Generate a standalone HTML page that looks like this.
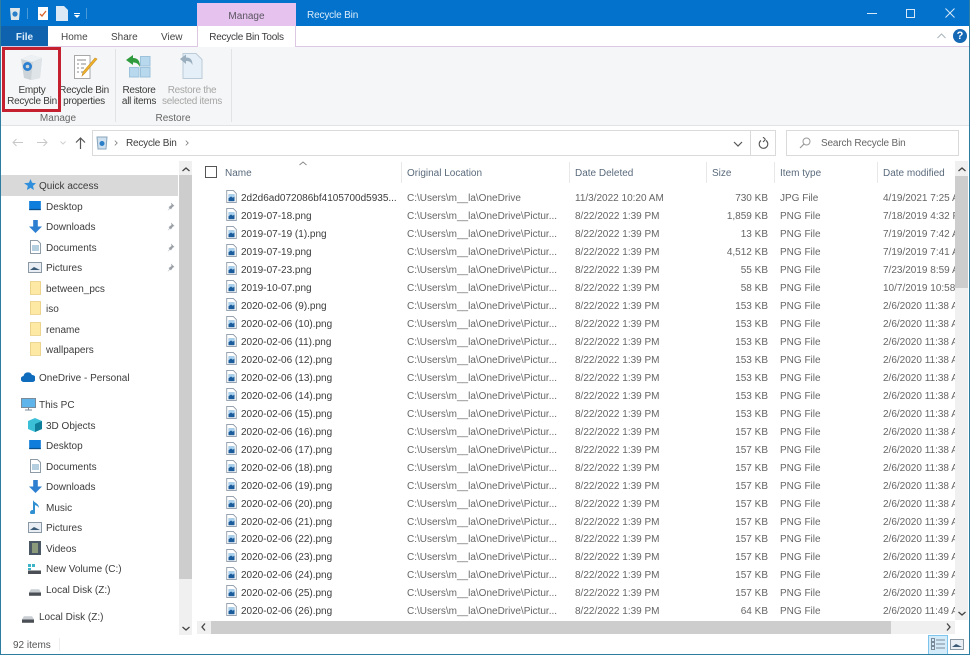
<!DOCTYPE html>
<html><head><meta charset="utf-8"><title>Recycle Bin</title>
<style>
html,body{margin:0;padding:0;width:970px;height:655px;overflow:hidden;background:#fff}
body{position:relative;font:10px/18px "Liberation Sans",sans-serif;color:#4a4a4a}
div,span,svg{position:absolute;white-space:nowrap}
.t{color:#555}
.r{left:0;width:955px;height:18px}
.r svg{left:226px;top:2px;width:11px;height:13px}
.r span{margin-top:2px}
.n{left:241px;color:#3c3c3c}.o{left:407px;width:153px;overflow:hidden;color:#666}.d{left:575px;color:#666}
.s{right:187px;color:#666}.y{left:780px;color:#666}.m{left:883px;width:72px;overflow:hidden;color:#666}
.h{top:165px;color:#5a6a7c;font-size:10px}
.v{top:162px;width:1px;height:21px;background:#e8e8e8}
.nv{height:20px;line-height:20px;color:#3c3c3c;font-size:10px;margin-top:2px}
.l1{left:46px}.l0{left:39px}
.i{left:28px}.i0{left:21px}
.rb{text-align:center;line-height:11px;color:#444;font-size:10px;letter-spacing:-.28px}
</style></head><body>
<svg width="0" height="0" style="left:0;top:0"><defs>
<symbol id="f" viewBox="0 0 12 15"><path d="M.5.500h7.500l3.500 3.500v10.500h-11z" fill="#fff" stroke="#8a98a6"/><rect x="2.500" y="5" width="7" height="8" fill="#1a5c9c"/><path d="M2.500 5h7v2.500l-2 1.500-2-1.500-3 2z" fill="#a8d0ec"/></symbol>
<symbol id="fo" viewBox="0 0 12 15"><path d="M.5.500h11v14h-11z" fill="#fde9a4" stroke="#ead18a"/></symbol>
<symbol id="mon" viewBox="0 0 14 12"><rect width="14" height="10.500" fill="#0f7ddb"/><rect y="9.500" width="14" height="1.500" fill="#0c4f88"/></symbol>
<symbol id="dn" viewBox="0 0 14 14"><path d="M4.500 0h5v7h4.500l-7 7-7-7h4.500z" fill="#2f7fd0"/></symbol>
<symbol id="doc" viewBox="0 0 11 14"><path d="M.5.500h7l3 3v10h-10z" fill="#fff" stroke="#8e9ca8"/><path d="M2 6h7M2 8h7M2 10h7" stroke="#6aa0c0"/></symbol>
<symbol id="pic" viewBox="0 0 14 11"><rect x=".5" y=".5" width="13" height="10" fill="#e8eef4" stroke="#8a98a6"/><path d="M2 8l4-3 6 3z" fill="#3a5a78"/></symbol>
<symbol id="pin" viewBox="0 0 9 9"><path d="M5 .5l3.500 3.500-1.500.5-1.500 2-.5 1-1-1-2.500 2.500 2-3-1-1 1-.5 2-1.500z" fill="#9aa0a6"/></symbol>
<symbol id="drv" viewBox="0 0 13 7"><path d="M2 0h9l2 3.500v3.500h-13v-3.500z" fill="#c9ced2"/><rect y="3.500" width="13" height="3.500" fill="#4a4f55"/></symbol>
</defs></svg>

<!-- title bar -->
<div style="left:0;top:0;width:970px;height:26px;background:#0272cc"></div>
<div style="left:0;top:0;width:1px;height:655px;background:#2c7d9f;z-index:5"></div>
<div style="right:0;top:0;width:1px;height:655px;background:#2c7d9f;z-index:5"></div>
<div style="left:0;top:654px;width:970px;height:1px;background:#2c7d9f;z-index:5"></div>
<svg style="left:9px;top:6px" width="12" height="15" viewBox="0 0 12 15"><path d="M1 2h10l-1 12H2z" fill="#dfe6ea"/><circle cx="6" cy="8" r="2.600" fill="#2a7fc8"/></svg>
<div style="left:27px;top:8px;width:1px;height:11px;background:#4a9ad8"></div>
<svg style="left:38px;top:7px" width="10" height="13" viewBox="0 0 10 13"><rect width="10" height="13" fill="#fff"/><path d="M2 7l2 2 4-5" stroke="#d9622a" fill="none" stroke-width="1.300"/></svg>
<svg style="left:56px;top:6px" width="12" height="15" viewBox="0 0 12 15"><path d="M0 0h8l4 4v11H0z" fill="#dbe8f6"/></svg>
<div style="left:74px;top:13px;width:6px;height:1px;background:#fff"></div>
<div style="left:74px;top:15px;width:0;height:0;border:3px solid transparent;border-top:3px solid #fff;border-bottom:0"></div>
<div style="left:86px;top:8px;width:1px;height:11px;background:#4a9ad8"></div>
<div style="left:197px;top:3px;width:99px;height:23px;background:#e6c2ef;text-align:center;line-height:27px;color:#5b5560">Manage</div>
<div style="left:307px;top:7px;color:#dcecfa;letter-spacing:-.15px">Recycle Bin</div>
<div style="left:867px;top:13px;width:10px;height:1px;background:#d8e8f6"></div>
<div style="left:906px;top:9px;width:7px;height:7px;border:1px solid #d8e8f6"></div>
<svg style="left:945px;top:8px" width="10" height="10" viewBox="0 0 10 10"><path d="M.5.500l9 9M9.500.500l-9 9" stroke="#d8e8f6"/></svg>

<!-- tabs -->
<div style="left:0;top:26px;width:970px;height:20px;background:#fff;border-bottom:1px solid #dcc8e2"></div>
<div style="left:1px;top:26px;width:47px;height:20px;background:#0f62ae;color:#dcecfa;text-align:center;line-height:23px;font-weight:bold">File</div>
<div style="left:61px;top:29px;color:#444">Home</div>
<div style="left:111px;top:29px;color:#444">Share</div>
<div style="left:161px;top:29px;color:#444">View</div>
<div style="left:197px;top:26px;width:97px;height:21px;background:#fff;border-left:1px solid #dcc8e2;border-right:1px solid #dcc8e2;text-align:center;line-height:23px;color:#3c3c3c;z-index:2;letter-spacing:-.25px">Recycle Bin Tools</div>
<svg style="left:937px;top:33px" width="9" height="6" viewBox="0 0 9 6"><path d="M.5 5l4-4 4 4" fill="none" stroke="#a9b4bc"/></svg>
<div style="left:953px;top:29px;width:14px;height:14px;border-radius:7px;background:#1568b4;color:#fff;font:bold 11px/14px 'Liberation Sans',sans-serif;text-align:center">?</div>

<!-- ribbon -->
<div style="left:0;top:47px;width:970px;height:78px;background:#f5f6f7;border-bottom:1px solid #e2e3e4"></div>
<div style="left:115px;top:49px;width:1px;height:73px;background:#e2e3e4"></div>
<div style="left:231px;top:49px;width:1px;height:73px;background:#e2e3e4"></div>
<svg style="left:20px;top:55px" width="23" height="25" viewBox="0 0 23 25"><path d="M1 4l10-4 11 3-2 20-9 2-7-2z" fill="#cdd4d9"/><path d="M1 4l10-4 11 3-10 4z" fill="#eef1f3"/><path d="M13 7l9-4-2 20-9 2z" fill="#dfe4e8"/><circle cx="7.500" cy="11.500" r="4.500" fill="#2b7fd0"/><circle cx="7.500" cy="11.500" r="1.800" fill="#cdd4d9"/></svg>
<svg style="left:74px;top:55px" width="24" height="24" viewBox="0 0 24 24"><path d="M.5.500h15.500v23H.5z" fill="#fff" stroke="#a8a8a8"/><path d="M3 5h9M3 9h2M7 9h5M3 13h2M7 13h3M3 17h2M7 17h2" stroke="#888"/><path d="M23 4L11 18l-3 3 1-4L21 3z" fill="#f0b429" stroke="#c9902a" stroke-width=".6"/></svg>
<svg style="left:124px;top:53px" width="28" height="26" viewBox="0 0 28 26"><rect x="5.500" y="14.500" width="9.500" height="9.500" fill="#b8d8ee" stroke="#9cc2dc"/><rect x="16.500" y="3.500" width="9.500" height="9.500" fill="#b8d8ee" stroke="#9cc2dc"/><rect x="16.500" y="14.500" width="9.500" height="9.500" fill="#b8d8ee" stroke="#9cc2dc"/><path d="M2 7l7-5v3c5 0 7 3 7 9-2-3.500-3.500-4.500-7-4.500V12z" fill="#2f9b3c"/></svg>
<svg style="left:180px;top:53px" width="23" height="26" viewBox="0 0 23 26"><path d="M3 .5h13l6 6v19H3z" fill="#e4eff7" stroke="#bccbd8"/><path d="M0 6l6-4.500v3c5 0 6.500 3 6.500 7.500-1.500-3-3-4-6.500-4V11z" fill="#9aaebe"/></svg>
<div class="rb" style="left:6px;top:85px;width:52px;color:#3c3c3c">Empty<br>Recycle Bin</div>
<div class="rb" style="left:58px;top:85px;width:52px;color:#3c3c3c">Recycle Bin<br>properties</div>
<div class="rb" style="left:118px;top:85px;width:42px;color:#3c3c3c">Restore<br>all items</div>
<div class="rb" style="left:160px;top:85px;width:64px;color:#a6a6a6">Restore the<br>selected items</div>
<div style="left:8px;top:110px;width:100px;text-align:center;color:#666">Manage</div>
<div style="left:116px;top:110px;width:114px;text-align:center;color:#666">Restore</div>
<div style="left:2px;top:47px;width:53px;height:59px;border:3px solid #c4202f;z-index:3"></div>

<!-- address -->
<svg style="left:12px;top:138px" width="11" height="9" viewBox="0 0 11 9"><path d="M11 4.500H1M4.500 1L1 4.500 4.500 8" fill="none" stroke="#c8c8c8"/></svg>
<svg style="left:37px;top:138px" width="11" height="9" viewBox="0 0 11 9"><path d="M0 4.500h10M6.500 1L10 4.500 6.500 8" fill="none" stroke="#c8c8c8"/></svg>
<svg style="left:60px;top:141px" width="6" height="4" viewBox="0 0 6 4"><path d="M.5.500L3 3 5.500.500" fill="none" stroke="#d0d0d0"/></svg>
<svg style="left:75px;top:137px" width="11" height="12" viewBox="0 0 11 12"><path d="M5.500 12V1M1 5.500L5.500 1 10 5.500" fill="none" stroke="#555" stroke-width="1.200"/></svg>
<div style="left:92px;top:130px;width:682px;height:24px;border:1px solid #dadada;background:#fff"></div>
<div style="left:750px;top:130px;width:1px;height:26px;background:#dadada"></div>
<svg style="left:96px;top:136px" width="12" height="14" viewBox="0 0 12 14"><path d="M1 1h10l-1 12H2z" fill="#cfe0ee" stroke="#8aa6bc"/><circle cx="6" cy="7.500" r="2.500" fill="#2a7fc8"/></svg>
<svg style="left:114px;top:140px" width="4" height="6" viewBox="0 0 5 7"><path d="M1 .5l3 3-3 3" fill="none" stroke="#777"/></svg>
<div style="left:126px;top:135px;color:#3c3c3c;letter-spacing:-.2px">Recycle Bin</div>
<svg style="left:185px;top:140px" width="4" height="6" viewBox="0 0 5 7"><path d="M1 .5l3 3-3 3" fill="none" stroke="#777"/></svg>
<svg style="left:733px;top:141px" width="10" height="6" viewBox="0 0 10 6"><path d="M1 1l4 4 4-4" fill="none" stroke="#555" stroke-width="1.200"/></svg>
<svg style="left:758px;top:137px" width="11" height="12" viewBox="0 0 11 12"><path d="M3 3.500a4.300 4.300 0 1 0 5 0M5 0l2.500 2.500M5 5L7.500 2.500" fill="none" stroke="#555" stroke-width="1.100"/></svg>
<div style="left:786px;top:130px;width:171px;height:24px;border:1px solid #dadada;background:#fff"></div>
<svg style="left:799px;top:137px" width="12" height="12" viewBox="0 0 12 12"><circle cx="7.500" cy="4.500" r="3.500" fill="none" stroke="#999"/><path d="M5 7l-4 4" stroke="#999" stroke-width="1.200"/></svg>
<div style="left:821px;top:135px;color:#666;letter-spacing:-.15px">Search Recycle Bin</div>

<!-- nav pane -->
<div style="left:1px;top:175px;width:177px;height:21px;background:#d9d9d9"></div>
<div style="left:179px;top:161px;width:13px;height:474px;background:#f0f0f0"></div>
<div style="left:179px;top:175px;width:13px;height:404px;background:#cdcdcd"></div>
<svg style="left:182px;top:167px" width="8" height="5" viewBox="0 0 8 5"><path d="M.5 4L4 1l3.500 3" fill="none" stroke="#444" stroke-width="1.300"/></svg>
<svg style="left:182px;top:626px" width="8" height="5" viewBox="0 0 8 5"><path d="M.5 1L4 4l3.500-3" fill="none" stroke="#444" stroke-width="1.300"/></svg>

<svg style="left:24px;top:179px" width="12" height="12" viewBox="0 0 12 12"><path d="M6.500 0l1.600 3.800 3.900.4-3 2.700.9 4.100-3.400-2.100-3.600 2.100.9-4.100L0 4.200l4.900-.4z" fill="#2f8fdc"/></svg>
<div class="nv l0" style="top:175px">Quick access</div>

<svg style="left:28px;top:201px" width="14" height="10"><use href="#mon"/></svg><div class="nv l1" style="top:196px">Desktop</div>
<svg style="left:29px;top:220px" width="13" height="13"><use href="#dn"/></svg><div class="nv l1" style="top:216px">Downloads</div>
<svg style="left:30px;top:240px" width="11" height="14"><use href="#doc"/></svg><div class="nv l1" style="top:237px">Documents</div>
<svg style="left:28px;top:262px" width="14" height="11"><use href="#pic"/></svg><div class="nv l1" style="top:257px">Pictures</div>
<svg style="left:30px;top:281px" width="11" height="14"><use href="#fo"/></svg><div class="nv l1" style="top:278px">between_pcs</div>
<svg style="left:30px;top:301px" width="11" height="14"><use href="#fo"/></svg><div class="nv l1" style="top:298px">iso</div>
<svg style="left:30px;top:322px" width="11" height="14"><use href="#fo"/></svg><div class="nv l1" style="top:319px">rename</div>
<svg style="left:30px;top:342px" width="11" height="14"><use href="#fo"/></svg><div class="nv l1" style="top:339px">wallpapers</div>
<svg style="left:166px;top:202px" width="9" height="9"><use href="#pin"/></svg>
<svg style="left:166px;top:222px" width="9" height="9"><use href="#pin"/></svg>
<svg style="left:166px;top:243px" width="9" height="9"><use href="#pin"/></svg>
<svg style="left:166px;top:263px" width="9" height="9"><use href="#pin"/></svg>

<svg style="left:21px;top:372px" width="14" height="10" viewBox="0 0 14 10"><path d="M3 10a3 3 0 0 1-.5-6 4.500 4.500 0 0 1 8.500-1 3.500 3.500 0 0 1 .5 7z" fill="#0f6cbd"/></svg>
<div class="nv l0" style="top:367px">OneDrive - Personal</div>
<svg style="left:21px;top:398px" width="15" height="13" viewBox="0 0 15 13"><rect x=".5" y=".5" width="14" height="9" fill="#5fb4ea" stroke="#7a8a98"/><path d="M4 12h7M7.500 10v2" stroke="#7a8a98"/></svg>
<div class="nv l0" style="top:394px">This PC</div>
<svg style="left:28px;top:418px" width="14" height="14" viewBox="0 0 14 14"><path d="M7 0l7 3v8l-7 3-7-3V3z" fill="#3cc0d8"/><path d="M7 6l7-3v8l-7 3z" fill="#0f7f9c"/></svg><div class="nv l1" style="top:415px">3D Objects</div>
<svg style="left:28px;top:440px" width="14" height="10"><use href="#mon"/></svg><div class="nv l1" style="top:435px">Desktop</div>
<svg style="left:30px;top:459px" width="11" height="14"><use href="#doc"/></svg><div class="nv l1" style="top:456px">Documents</div>
<svg style="left:29px;top:480px" width="13" height="13"><use href="#dn"/></svg><div class="nv l1" style="top:476px">Downloads</div>
<svg style="left:30px;top:500px" width="10" height="14" viewBox="0 0 10 14"><path d="M3 10V0c1 3 6 3 6 8-1-2-3-2.500-4-3v7a2.500 2.500 0 1 1-2-2z" fill="#2f8fd0"/></svg><div class="nv l1" style="top:497px">Music</div>
<svg style="left:28px;top:522px" width="14" height="11"><use href="#pic"/></svg><div class="nv l1" style="top:517px">Pictures</div>
<svg style="left:29px;top:541px" width="12" height="14" viewBox="0 0 12 14"><rect width="12" height="14" fill="#4a5866"/><rect x="3" y="2" width="6" height="10" fill="#8a9a7a"/></svg><div class="nv l1" style="top:538px">Videos</div>
<svg style="left:28px;top:564px" width="13" height="10" viewBox="0 0 13 10"><rect width="3" height="3" fill="#3cb4c8"/><rect x="4" width="3" height="3" fill="#3cb4c8"/><rect y="4" width="3" height="2" fill="#3cb4c8"/><rect y="6.500" width="13" height="3.500" fill="#4a4f55"/></svg><div class="nv l1" style="top:558px">New Volume (C:)</div>
<svg style="left:29px;top:589px" width="12" height="7"><use href="#drv"/></svg><div class="nv l1" style="top:579px">Local Disk (Z:)</div>
<svg style="left:22px;top:616px" width="12" height="7"><use href="#drv"/></svg><div class="nv l0" style="top:606px">Local Disk (Z:)</div>

<!-- header -->
<div style="left:205px;top:166px;width:10px;height:10px;border:1px solid #555"></div>
<svg style="left:299px;top:161px" width="8" height="5" viewBox="0 0 8 5"><path d="M.5 4L4 1l3.500 3" fill="none" stroke="#8a8a8a"/></svg>
<div class="h" style="left:225px">Name</div>
<div class="v" style="left:401px"></div>
<div class="h" style="left:407px">Original Location</div>
<div class="v" style="left:569px"></div>
<div class="h" style="left:575px">Date Deleted</div>
<div class="v" style="left:706px"></div>
<div class="h" style="left:712px">Size</div>
<div class="v" style="left:774px"></div>
<div class="h" style="left:780px">Item type</div>
<div class="v" style="left:877px"></div>
<div class="h" style="left:883px">Date modified</div>

<!-- rows -->
<div class="r" style="top:188px"><svg width="12" height="15"><use href="#f"/></svg><span class="n">2d2d6ad072086bf4105700d5935...</span><span class="o">C:\Users\m__la\OneDrive</span><span class="d">11/3/2022 10:20 AM</span><span class="s">730 KB</span><span class="y">JPG File</span><span class="m">4/19/2021 7:25 AM</span></div>
<div class="r" style="top:206px"><svg width="12" height="15"><use href="#f"/></svg><span class="n">2019-07-18.png</span><span class="o">C:\Users\m__la\OneDrive\Pictur...</span><span class="d">8/22/2022 1:39 PM</span><span class="s">1,859 KB</span><span class="y">PNG File</span><span class="m">7/18/2019 4:32 PM</span></div>
<div class="r" style="top:224px"><svg width="12" height="15"><use href="#f"/></svg><span class="n">2019-07-19 (1).png</span><span class="o">C:\Users\m__la\OneDrive\Pictur...</span><span class="d">8/22/2022 1:39 PM</span><span class="s">13 KB</span><span class="y">PNG File</span><span class="m">7/19/2019 7:42 AM</span></div>
<div class="r" style="top:242px"><svg width="12" height="15"><use href="#f"/></svg><span class="n">2019-07-19.png</span><span class="o">C:\Users\m__la\OneDrive\Pictur...</span><span class="d">8/22/2022 1:39 PM</span><span class="s">4,512 KB</span><span class="y">PNG File</span><span class="m">7/19/2019 7:41 AM</span></div>
<div class="r" style="top:260px"><svg width="12" height="15"><use href="#f"/></svg><span class="n">2019-07-23.png</span><span class="o">C:\Users\m__la\OneDrive\Pictur...</span><span class="d">8/22/2022 1:39 PM</span><span class="s">55 KB</span><span class="y">PNG File</span><span class="m">7/23/2019 8:59 AM</span></div>
<div class="r" style="top:278px"><svg width="12" height="15"><use href="#f"/></svg><span class="n">2019-10-07.png</span><span class="o">C:\Users\m__la\OneDrive\Pictur...</span><span class="d">8/22/2022 1:39 PM</span><span class="s">58 KB</span><span class="y">PNG File</span><span class="m">10/7/2019 10:58 AM</span></div>
<div class="r" style="top:296px"><svg width="12" height="15"><use href="#f"/></svg><span class="n">2020-02-06 (9).png</span><span class="o">C:\Users\m__la\OneDrive\Pictur...</span><span class="d">8/22/2022 1:39 PM</span><span class="s">153 KB</span><span class="y">PNG File</span><span class="m">2/6/2020 11:38 AM</span></div>
<div class="r" style="top:314px"><svg width="12" height="15"><use href="#f"/></svg><span class="n">2020-02-06 (10).png</span><span class="o">C:\Users\m__la\OneDrive\Pictur...</span><span class="d">8/22/2022 1:39 PM</span><span class="s">153 KB</span><span class="y">PNG File</span><span class="m">2/6/2020 11:38 AM</span></div>
<div class="r" style="top:332px"><svg width="12" height="15"><use href="#f"/></svg><span class="n">2020-02-06 (11).png</span><span class="o">C:\Users\m__la\OneDrive\Pictur...</span><span class="d">8/22/2022 1:39 PM</span><span class="s">153 KB</span><span class="y">PNG File</span><span class="m">2/6/2020 11:38 AM</span></div>
<div class="r" style="top:350px"><svg width="12" height="15"><use href="#f"/></svg><span class="n">2020-02-06 (12).png</span><span class="o">C:\Users\m__la\OneDrive\Pictur...</span><span class="d">8/22/2022 1:39 PM</span><span class="s">153 KB</span><span class="y">PNG File</span><span class="m">2/6/2020 11:38 AM</span></div>
<div class="r" style="top:368px"><svg width="12" height="15"><use href="#f"/></svg><span class="n">2020-02-06 (13).png</span><span class="o">C:\Users\m__la\OneDrive\Pictur...</span><span class="d">8/22/2022 1:39 PM</span><span class="s">153 KB</span><span class="y">PNG File</span><span class="m">2/6/2020 11:38 AM</span></div>
<div class="r" style="top:386px"><svg width="12" height="15"><use href="#f"/></svg><span class="n">2020-02-06 (14).png</span><span class="o">C:\Users\m__la\OneDrive\Pictur...</span><span class="d">8/22/2022 1:39 PM</span><span class="s">153 KB</span><span class="y">PNG File</span><span class="m">2/6/2020 11:38 AM</span></div>
<div class="r" style="top:404px"><svg width="12" height="15"><use href="#f"/></svg><span class="n">2020-02-06 (15).png</span><span class="o">C:\Users\m__la\OneDrive\Pictur...</span><span class="d">8/22/2022 1:39 PM</span><span class="s">153 KB</span><span class="y">PNG File</span><span class="m">2/6/2020 11:38 AM</span></div>
<div class="r" style="top:422px"><svg width="12" height="15"><use href="#f"/></svg><span class="n">2020-02-06 (16).png</span><span class="o">C:\Users\m__la\OneDrive\Pictur...</span><span class="d">8/22/2022 1:39 PM</span><span class="s">157 KB</span><span class="y">PNG File</span><span class="m">2/6/2020 11:38 AM</span></div>
<div class="r" style="top:440px"><svg width="12" height="15"><use href="#f"/></svg><span class="n">2020-02-06 (17).png</span><span class="o">C:\Users\m__la\OneDrive\Pictur...</span><span class="d">8/22/2022 1:39 PM</span><span class="s">157 KB</span><span class="y">PNG File</span><span class="m">2/6/2020 11:38 AM</span></div>
<div class="r" style="top:458px"><svg width="12" height="15"><use href="#f"/></svg><span class="n">2020-02-06 (18).png</span><span class="o">C:\Users\m__la\OneDrive\Pictur...</span><span class="d">8/22/2022 1:39 PM</span><span class="s">157 KB</span><span class="y">PNG File</span><span class="m">2/6/2020 11:38 AM</span></div>
<div class="r" style="top:476px"><svg width="12" height="15"><use href="#f"/></svg><span class="n">2020-02-06 (19).png</span><span class="o">C:\Users\m__la\OneDrive\Pictur...</span><span class="d">8/22/2022 1:39 PM</span><span class="s">157 KB</span><span class="y">PNG File</span><span class="m">2/6/2020 11:38 AM</span></div>
<div class="r" style="top:494px"><svg width="12" height="15"><use href="#f"/></svg><span class="n">2020-02-06 (20).png</span><span class="o">C:\Users\m__la\OneDrive\Pictur...</span><span class="d">8/22/2022 1:39 PM</span><span class="s">157 KB</span><span class="y">PNG File</span><span class="m">2/6/2020 11:38 AM</span></div>
<div class="r" style="top:512px"><svg width="12" height="15"><use href="#f"/></svg><span class="n">2020-02-06 (21).png</span><span class="o">C:\Users\m__la\OneDrive\Pictur...</span><span class="d">8/22/2022 1:39 PM</span><span class="s">157 KB</span><span class="y">PNG File</span><span class="m">2/6/2020 11:39 AM</span></div>
<div class="r" style="top:529px"><svg width="12" height="15"><use href="#f"/></svg><span class="n">2020-02-06 (22).png</span><span class="o">C:\Users\m__la\OneDrive\Pictur...</span><span class="d">8/22/2022 1:39 PM</span><span class="s">157 KB</span><span class="y">PNG File</span><span class="m">2/6/2020 11:39 AM</span></div>
<div class="r" style="top:547px"><svg width="12" height="15"><use href="#f"/></svg><span class="n">2020-02-06 (23).png</span><span class="o">C:\Users\m__la\OneDrive\Pictur...</span><span class="d">8/22/2022 1:39 PM</span><span class="s">157 KB</span><span class="y">PNG File</span><span class="m">2/6/2020 11:39 AM</span></div>
<div class="r" style="top:565px"><svg width="12" height="15"><use href="#f"/></svg><span class="n">2020-02-06 (24).png</span><span class="o">C:\Users\m__la\OneDrive\Pictur...</span><span class="d">8/22/2022 1:39 PM</span><span class="s">157 KB</span><span class="y">PNG File</span><span class="m">2/6/2020 11:39 AM</span></div>
<div class="r" style="top:583px"><svg width="12" height="15"><use href="#f"/></svg><span class="n">2020-02-06 (25).png</span><span class="o">C:\Users\m__la\OneDrive\Pictur...</span><span class="d">8/22/2022 1:39 PM</span><span class="s">157 KB</span><span class="y">PNG File</span><span class="m">2/6/2020 11:39 AM</span></div>
<div class="r" style="top:601px"><svg width="12" height="15"><use href="#f"/></svg><span class="n">2020-02-06 (26).png</span><span class="o">C:\Users\m__la\OneDrive\Pictur...</span><span class="d">8/22/2022 1:39 PM</span><span class="s">64 KB</span><span class="y">PNG File</span><span class="m">2/6/2020 11:49 AM</span></div>

<!-- file scrollbars -->
<div style="left:955px;top:161px;width:13px;height:459px;background:#f0f0f0"></div>
<div style="left:955px;top:176px;width:13px;height:112px;background:#cdcdcd"></div>
<svg style="left:958px;top:167px" width="8" height="5" viewBox="0 0 8 5"><path d="M.5 4L4 1l3.500 3" fill="none" stroke="#444" stroke-width="1.300"/></svg>
<svg style="left:958px;top:611px" width="8" height="5" viewBox="0 0 8 5"><path d="M.5 1L4 4l3.500-3" fill="none" stroke="#444" stroke-width="1.300"/></svg>
<div style="left:197px;top:621px;width:758px;height:13px;background:#f0f0f0"></div>
<div style="left:211px;top:621px;width:680px;height:13px;background:#cdcdcd"></div>
<svg style="left:201px;top:623px" width="5" height="8" viewBox="0 0 5 8"><path d="M4 .5L1 4l3 3.500" fill="none" stroke="#444" stroke-width="1.300"/></svg>
<svg style="left:946px;top:623px" width="5" height="8" viewBox="0 0 5 8"><path d="M1 .5L4 4 1 7.500" fill="none" stroke="#444" stroke-width="1.300"/></svg>

<!-- status -->
<div style="left:13px;top:637px;color:#555">92 items</div>
<div style="left:59px;top:638px;width:1px;height:13px;background:#eee"></div>
<div style="left:928px;top:635px;width:18px;height:18px;background:#d4ecfa;border:1px solid #7cc4ec"></div>
<svg style="left:931px;top:638px" width="14" height="13" viewBox="0 0 14 13"><rect x=".5" y=".5" width="3" height="3" fill="none" stroke="#7a8a98"/><rect x=".5" y="4.500" width="3" height="3" fill="none" stroke="#7a8a98"/><rect x=".5" y="8.500" width="3" height="3" fill="none" stroke="#7a8a98"/><path d="M5 2h9M5 6h9M5 10h9" stroke="#7a8a98"/></svg>
<svg style="left:950px;top:639px" width="14" height="11"><use href="#pic"/></svg>
</body></html>
